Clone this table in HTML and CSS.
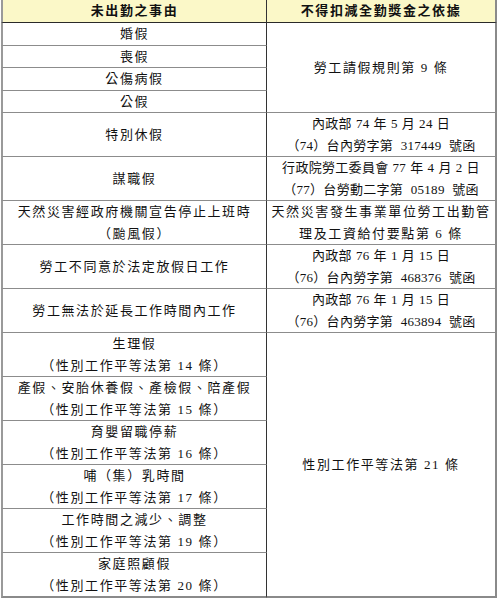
FILE: index.html
```html
<!DOCTYPE html>
<html lang="zh-Hant">
<head>
<meta charset="utf-8">
<title>未出勤之事由</title>
<link rel="stylesheet" href="styles.css">
</head>
<body>
<table class="grid">
  <thead>
    <tr>
      <th class="c1">未出勤之事由</th>
      <th class="c2">不得扣減全勤獎金之依據</th>
    </tr>
  </thead>
  <tbody>
    <tr class="s"><td class="c1">婚假</td><td class="c2" rowspan="4">勞工請假規則第 9 條</td></tr>
    <tr class="s"><td class="c1">喪假</td></tr>
    <tr class="s"><td class="c1">公傷病假</td></tr>
    <tr class="s"><td class="c1">公假</td></tr>
    <tr>
      <td class="c1">特別休假</td>
      <td class="c2 cite">內政部 74 年 5 月 24 日<br><span class="wide">（74）台內勞字第 317449 號函</span></td>
    </tr>
    <tr>
      <td class="c1">謀職假</td>
      <td class="c2 cite">行政院勞工委員會 77 年 4 月 2 日<br><span class="wide">（77）台勞動二字第 05189 號函</span></td>
    </tr>
    <tr>
      <td class="c1">天然災害經政府機關宣告停止上班時<br>（颱風假）</td>
      <td class="c2">天然災害發生事業單位勞工出勤管<br>理及工資給付要點第 6 條</td>
    </tr>
    <tr>
      <td class="c1">勞工不同意於法定放假日工作</td>
      <td class="c2 cite">內政部 76 年 1 月 15 日<br><span class="wide">（76）台內勞字第 468376 號函</span></td>
    </tr>
    <tr>
      <td class="c1">勞工無法於延長工作時間內工作</td>
      <td class="c2 cite">內政部 76 年 1 月 15 日<br><span class="wide">（76）台內勞字第 463894 號函</span></td>
    </tr>
    <tr>
      <td class="c1">生理假<br>（性別工作平等法第 14 條）</td>
      <td class="c2 last" rowspan="6">性別工作平等法第 21 條</td>
    </tr>
    <tr><td class="c1">產假、安胎休養假、產檢假、陪產假<br>（性別工作平等法第 15 條）</td></tr>
    <tr><td class="c1">育嬰留職停薪<br>（性別工作平等法第 16 條）</td></tr>
    <tr><td class="c1">哺（集）乳時間<br>（性別工作平等法第 17 條）</td></tr>
    <tr><td class="c1">工作時間之減少、調整<br>（性別工作平等法第 19 條）</td></tr>
    <tr><td class="c1 last">家庭照顧假<br>（性別工作平等法第 20 條）</td></tr>
  </tbody>
</table>
</body>
</html>
```
FILE: styles.css
```css
html, body {
  margin: 0;
  padding: 0;
  background: #ffffff;
}

.grid {
  border-collapse: separate;
  border-spacing: 0;
  table-layout: fixed;
  width: 496px;
  margin-left: 1px;
  font-family: "Liberation Serif", "Noto Sans CJK TC", serif;
  font-size: 13px;
  color: #111111;
  letter-spacing: 1.6px;
}

.grid th,
.grid td {
  padding: 0;
  text-align: center;
  vertical-align: middle;
  line-height: 21.5px;
  border-bottom: 1px solid #8c8c8c;
}

.grid th {
  background: #fbf8c8;
  font-weight: bold;
  line-height: 22px;
  border-bottom: 1px solid #2a2a2a;
}

.c1 {
  width: 263px;
  border-left: 2px solid #9a9a9a;
  border-right: 1px solid #333333;
}

.c2 {
  border-right: 2px solid #8a8a8a;
}

.cite {
  letter-spacing: 0.3px;
  word-spacing: 0.5px;
}

.wide {
  word-spacing: 4px;
}

.grid td.last {
  border-bottom: 2px solid #8a8a8a;
}
```
